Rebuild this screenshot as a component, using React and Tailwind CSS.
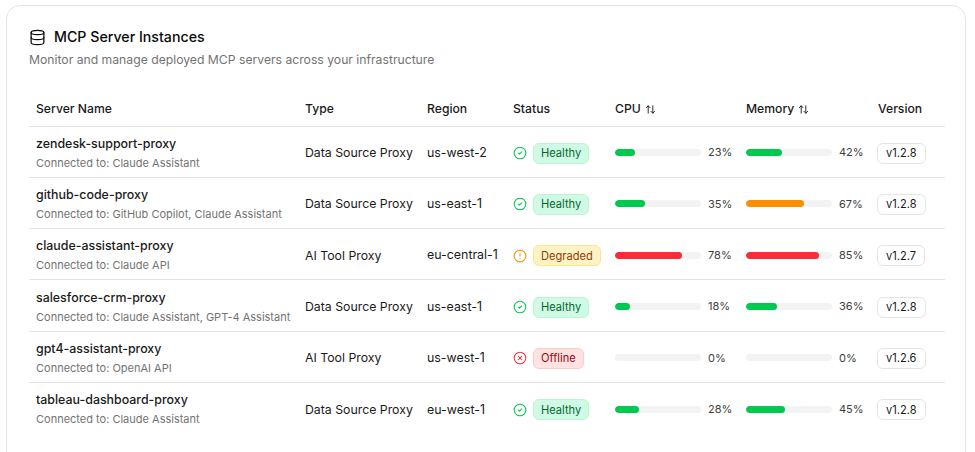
import React from "react";
import { Database, CircleCheck, CircleAlert, CircleX, ArrowUpDown } from "lucide-react";

const rows = [
  ["zendesk-support-proxy", "Claude Assistant", "Data Source Proxy", "us-west-2", "h", 23, 42, "v1.2.8"],
  ["github-code-proxy", "GitHub Copilot, Claude Assistant", "Data Source Proxy", "us-east-1", "h", 35, 67, "v1.2.8"],
  ["claude-assistant-proxy", "Claude API", "AI Tool Proxy", "eu-central-1", "d", 78, 85, "v1.2.7"],
  ["salesforce-crm-proxy", "Claude Assistant, GPT-4 Assistant", "Data Source Proxy", "us-east-1", "h", 18, 36, "v1.2.8"],
  ["gpt4-assistant-proxy", "OpenAI API", "AI Tool Proxy", "us-west-1", "o", 0, 0, "v1.2.6"],
  ["tableau-dashboard-proxy", "Claude Assistant", "Data Source Proxy", "eu-west-1", "h", 28, 45, "v1.2.8"],
];

const status = {
  h: { Icon: CircleCheck, icon: "text-[#00c950]", label: "Healthy", badge: "bg-[#d0fae5] border-[#b9f8cf] text-[#016630]" },
  d: { Icon: CircleAlert, icon: "text-[#ff8d00]", label: "Degraded", badge: "bg-[#fef3c6] border-[#fee685] text-[#973c00]" },
  o: { Icon: CircleX, icon: "text-[#fb2c36]", label: "Offline", badge: "bg-[#ffe2e2] border-[#ffc9c9] text-[#9f0712]" },
};

function barColor(v) {
  if (v >= 75) return "bg-[#fb2c36]";
  if (v >= 60) return "bg-[#ff8d00]";
  return "bg-[#00c950]";
}

function Usage({ value }) {
  return (
    <div className="flex items-center gap-[7px]">
      <div className="h-[7px] w-[86px] shrink-0 overflow-hidden rounded-full bg-[#f3f3f3]">
        <div className={`h-full rounded-full ${barColor(value)}`} style={{ width: `${value}%` }} />
      </div>
      <span className="text-[11px] text-[#404040]">{value}%</span>
    </div>
  );
}

function Head({ children, sort }) {
  return (
    <th className="h-[33px] px-[7px] text-left align-middle text-[12.2px] font-[450] text-[#1a1a1a]">
      <span className="flex items-center gap-[4px]">
        {children}
        {sort && <ArrowUpDown size={11} strokeWidth={2} />}
      </span>
    </th>
  );
}

export default function App() {
  return (
    <div className="h-[452px] overflow-hidden bg-white pl-[6px] pr-[9px] pt-[5px] font-['Inter',sans-serif]">
      <div className="h-[500px] rounded-[14px] border border-[#e5e5e5] bg-white pl-[22px] pr-[19px] pt-[21px]">
        <div className="flex items-center gap-[8px] text-[#0a0a0a]">
          <Database size={17} strokeWidth={1.75} />
          <h1 className="text-[14.2px] leading-[20px] font-medium">MCP Server Instances</h1>
        </div>
        <p className="mt-[4px] text-[12.2px] leading-[18px] text-[#737373]">
          Monitor and manage deployed MCP servers across your infrastructure
        </p>
        <table className="mt-[24px] w-[916px] table-fixed border-collapse">
          <colgroup>
            <col className="w-[269px]" />
            <col className="w-[122px]" />
            <col className="w-[86px]" />
            <col className="w-[102px]" />
            <col className="w-[131px]" />
            <col className="w-[132px]" />
            <col className="w-[74px]" />
          </colgroup>
          <thead>
            <tr className="border-b border-[#e5e5e5]">
              <Head>Server Name</Head>
              <Head>Type</Head>
              <Head>Region</Head>
              <Head>Status</Head>
              <Head sort>CPU</Head>
              <Head sort>Memory</Head>
              <Head>Version</Head>
            </tr>
          </thead>
          <tbody>
            {rows.map((r) => {
              const s = status[r[4]];
              return (
                <tr key={r[0]} className="h-[51.3px] border-b border-[#e5e5e5] last:border-b-0">
                  <td className="px-[7px] pt-[1px] align-middle">
                    <div className="text-[12.4px] leading-[18px] font-[450] text-[#1a1a1a]">{r[0]}</div>
                    <div className="mt-[3px] text-[11px] leading-[14px] text-[#737373]">Connected to: {r[1]}</div>
                  </td>
                  <td className="px-[7px] pt-[3px] align-middle whitespace-nowrap text-[12.3px] text-[#1a1a1a]">{r[2]}</td>
                  <td className="px-[7px] pt-[3px] align-middle whitespace-nowrap text-[12.4px] text-[#1a1a1a]">{r[3]}</td>
                  <td className="px-[7px] pt-[3px] align-middle">
                    <div className="flex items-center gap-[6px]">
                      <s.Icon size={14} strokeWidth={1.75} className={`shrink-0 ${s.icon}`} />
                      <span className={`rounded-[6px] border px-[7px] py-[1.5px] text-[11.1px] leading-[16px] font-normal ${s.badge}`}>{s.label}</span>
                    </div>
                  </td>
                  <td className="px-[7px] pt-[2px] align-middle"><Usage value={r[5]} /></td>
                  <td className="px-[7px] pt-[2px] align-middle"><Usage value={r[6]} /></td>
                  <td className="pl-[6px] pr-[7px] pt-[3px] align-middle">
                    <div className="flex">
                      <span className="rounded-[6px] border border-[#e5e5e5] px-[8px] py-[1.5px] text-[11.1px] leading-[16px] font-normal text-[#1a1a1a]">{r[7]}</span>
                    </div>
                  </td>
                </tr>
              );
            })}
          </tbody>
        </table>
      </div>
    </div>
  );
}
